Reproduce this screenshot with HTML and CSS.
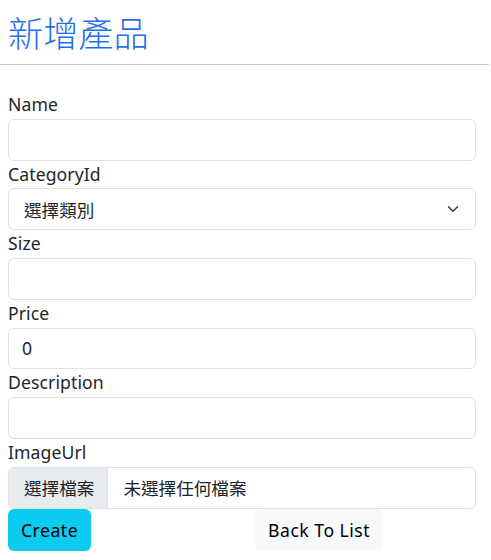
FILE: index.html
```html
<!DOCTYPE html>
<html>
<head>
  <title>新增產品</title>
  <link rel="stylesheet" href="styles.css">
</head>
<body>
  <div class="topbar"></div>
  <div class="header">
    <h2 class="title">新增產品</h2>
  </div>
  <hr class="line">
  <form class="product-form">
    <label for="name">Name</label>
    <input type="text" id="name" class="field">
    <label for="category">CategoryId</label>
    <div class="select-box">
      <span>選擇類別</span>
      <svg class="chevron" width="16" height="12" viewBox="0 0 16 16"><path d="M2 5l6 6 6-6" fill="none" stroke="#343a40" stroke-width="2" stroke-linecap="round" stroke-linejoin="round"/></svg>
    </div>
    <label for="size">Size</label>
    <input type="text" id="size" class="field">
    <label for="price">Price</label>
    <input type="text" id="price" class="field" value="0">
    <label for="desc">Description</label>
    <input type="text" id="desc" class="field">
    <label>ImageUrl</label>
    <div class="file-box">
      <span class="file-btn">選擇檔案</span>
      <span class="file-name">未選擇任何檔案</span>
    </div>
    <div class="actions">
      <button type="button" class="btn btn-create">Create</button>
      <button type="button" class="btn btn-back">Back To List</button>
    </div>
  </form>
</body>
</html>
```
FILE: styles.css
```css
html, body {
  margin: 0;
  background: #fff;
  color: #212529;
  font-family: "Noto Sans", "Noto Sans CJK TC", sans-serif;
  font-size: 17.6px;
}
.topbar {
  height: 0;
  box-shadow: 0 1px 5px rgba(0, 0, 0, 0.09);
}
.header {
  padding: 12px 8px 0 8px;
}
.title {
  margin: 0;
  font-size: 35.2px;
  font-weight: 300;
  line-height: 42px;
  color: #1f6ff0;
}
.line {
  margin: 10px 0 0 0;
  border: none;
  border-top: 1px solid #c9c9c9;
  width: 489px;
}
.product-form {
  padding: 26px 15px 0 8px;
}
label {
  display: block;
  line-height: 27.8px;
  height: 27.8px;
  letter-spacing: 0.1px;
}
.field, .select-box, .file-box {
  box-sizing: border-box;
  width: 100%;
  height: 41.8px;
  border: 1px solid #dee2e6;
  border-radius: 6px;
  font-family: inherit;
  font-size: 17.6px;
  color: #212529;
}
.field {
  display: block;
  padding: 0 13px;
  outline: none;
}
.select-box {
  display: flex;
  align-items: center;
  justify-content: space-between;
  padding: 0 14px 0 15px;
}
.file-box {
  display: flex;
  align-items: center;
  overflow: hidden;
}
.file-btn {
  height: 100%;
  display: flex;
  align-items: center;
  padding: 0 13px 0 15px;
  background: #e9ecef;
  border-right: 1px solid #dee2e6;
}
.file-name {
  padding-left: 15px;
}
.actions {
  display: flex;
  gap: 164px;
}
.btn {
  height: 42px;
  padding: 0 13px;
  border: none;
  border-radius: 6px;
  font-family: inherit;
  font-size: 17.6px;
  letter-spacing: 0.5px;
  color: #000;
  cursor: pointer;
}
.btn-create {
  background: #0dcaf0;
}
.btn-back {
  background: #f8f9fa;
}
```
